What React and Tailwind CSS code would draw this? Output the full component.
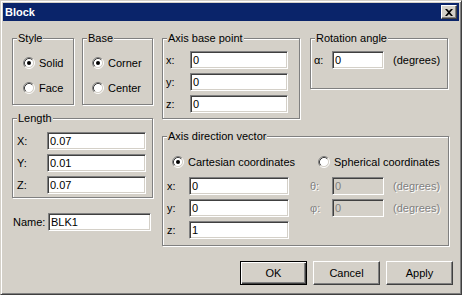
import React from 'react';

function Group({ label, className, children }) {
  return (
    <div className={`relative border border-[#808080] shadow-[inset_1px_1px_0_#fff,1px_1px_0_#fff] ${className}`}>
      <span className="absolute -top-[7px] left-[4px] bg-[#d4d0c8] px-[1px] leading-[13px]">{label}</span>
      {children}
    </div>
  );
}

function Field({ value, className, disabled }) {
  return (
    <input
      readOnly
      value={value}
      disabled={disabled}
      className={`h-[18px] border border-t-[#808080] border-l-[#808080] border-b-white border-r-white shadow-[inset_1px_1px_0_#404040,inset_-1px_-1px_0_#d4d0c8] pl-[2px] text-[11px] outline-none ${
        disabled ? 'bg-[#d4d0c8] text-[#808080]' : 'bg-white text-black'
      } ${className}`}
    />
  );
}

function Radio({ checked }) {
  return (
    <svg width="12" height="12" viewBox="0 0 12 12" className="shrink-0">
      <circle cx="6" cy="6" r="4.5" fill="#fff" />
      <path d="M9.89 2.11A5.5 5.5 0 0 0 2.11 9.89" fill="none" stroke="#808080" />
      <path d="M2.11 9.89A5.5 5.5 0 0 0 9.89 2.11" fill="none" stroke="#fff" />
      <path d="M9.18 2.82A4.5 4.5 0 0 0 2.82 9.18" fill="none" stroke="#404040" />
      <path d="M2.82 9.18A4.5 4.5 0 0 0 9.18 2.82" fill="none" stroke="#d4d0c8" />
      {checked && <circle cx="6" cy="6" r="2" fill="#000" />}
    </svg>
  );
}

function Option({ label, checked, className = '' }) {
  return (
    <div className={`flex h-[16px] items-center gap-[4px] ${className}`}>
      <Radio checked={checked} />
      <span>{label}</span>
    </div>
  );
}

function Button({ label, primary }) {
  return (
    <button
      className={`h-[24px] w-[67px] text-[11px] text-black bg-[#d4d0c8] ${
        primary
          ? 'border border-black shadow-[inset_1px_1px_0_#fff,inset_-1px_-1px_0_#404040,inset_-2px_-2px_0_#808080]'
          : 'border border-t-white border-l-white border-b-[#404040] border-r-[#404040] shadow-[inset_-1px_-1px_0_#808080]'
      }`}
    >
      {label}
    </button>
  );
}

export default function App() {
  return (
    <div className="w-[462px] h-[295px] bg-[#d4d0c8] border border-t-[#d4d0c8] border-l-[#d4d0c8] border-b-[#404040] border-r-[#404040] shadow-[inset_1px_1px_0_#fff,inset_-1px_-1px_0_#808080] p-[2px] flex flex-col font-['Liberation_Sans',Arial,sans-serif] text-[11px] text-black leading-[13px]">
      {/* Title bar */}
      <div className="h-[18px] bg-[#0a246a] flex items-center justify-between pl-[2px] pr-[2px]">
        <span className="font-bold text-white text-[11px]">Block</span>
        <div className="w-[16px] h-[14px] bg-[#d4d0c8] border border-t-white border-l-white border-b-[#404040] border-r-[#404040] shadow-[inset_-1px_-1px_0_#808080] flex items-center justify-center">
          <svg width="8" height="7" viewBox="0 0 8 7">
            <path d="M0 0h2l2 2 2-2h2L5 3.5 8 7H6L4 5 2 7H0l3-3.5z" fill="#000" />
          </svg>
        </div>
      </div>

      {/* Body */}
      <div className="flex gap-[9px] pl-[9px] pt-[17px]">
        {/* Left column */}
        <div className="flex flex-col w-[141px]">
          <div className="flex gap-[8px]">
            <Group label="Style" className="w-[62px] h-[67px] pt-[16px] pl-[10px] flex flex-col gap-[9px]">
              <Option label="Solid" checked />
              <Option label="Face" />
            </Group>
            <Group label="Base" className="w-[71px] h-[67px] pt-[16px] pl-[9px] flex flex-col gap-[9px]">
              <Option label="Corner" checked />
              <Option label="Center" />
            </Group>
          </div>

          <Group label="Length" className="mt-[13px] w-[141px] h-[80px] pt-[13px] pl-[4px] flex flex-col gap-[4px]">
            {[['X:', '0.07'], ['Y:', '0.01'], ['Z:', '0.07']].map(([l, v]) => (
              <div key={l} className="flex items-center">
                <span className="w-[30px]">{l}</span>
                <Field value={v} className="w-[99px]" />
              </div>
            ))}
          </Group>

          <div className="mt-[15px] flex items-center">
            <span className="w-[36px] pl-[1px]">Name:</span>
            <Field value="BLK1" className="w-[103px]" />
          </div>
        </div>

        {/* Right column */}
        <div className="flex flex-col">
          <div className="flex gap-[10px]">
            <Group label="Axis base point" className="w-[138px] h-[81px] pt-[12px] pl-[3px] flex flex-col gap-[4px]">
              {['x:', 'y:', 'z:'].map((l) => (
                <div key={l} className="flex items-center">
                  <span className="w-[24px]">{l}</span>
                  <Field value="0" className="w-[98px]" />
                </div>
              ))}
            </Group>
            <Group label="Rotation angle" className="w-[138px] h-[51px] pt-[12px] pl-[3px]">
              <div className="flex items-center">
                <span className="w-[18px]">α:</span>
                <Field value="0" className="w-[52px]" />
                <span className="ml-[9px]">(degrees)</span>
              </div>
            </Group>
          </div>

          <Group label="Axis direction vector" className="mt-[17px] w-[287px] h-[110px] pt-[17px] flex flex-col">
            <div className="flex pl-[9px]">
              <Option label="Cartesian coordinates" checked className="w-[146px]" />
              <Option label="Spherical coordinates" />
            </div>
            <div className="mt-[7px] pl-[4px] flex flex-col gap-[4px]">
              {[
                ['x:', '0', 'θ:'],
                ['y:', '0', 'φ:'],
                ['z:', '1', null],
              ].map(([l, v, s]) => (
                <div key={l} className="flex items-center">
                  <span className="w-[22px]">{l}</span>
                  <Field value={v} className="w-[100px]" />
                  {s && (
                    <div className="flex items-center ml-[21px] text-[#808080]">
                      <span className="w-[22px] [text-shadow:1px_1px_0_#fff]">{s}</span>
                      <Field value="0" disabled className="w-[52px]" />
                      <span className="ml-[9px] [text-shadow:1px_1px_0_#fff]">(degrees)</span>
                    </div>
                  )}
                </div>
              ))}
            </div>
          </Group>
        </div>
      </div>

      {/* Buttons */}
      <div className="mt-[15px] flex justify-end gap-[6px] pr-[6px]">
        <Button label="OK" primary />
        <Button label="Cancel" />
        <Button label="Apply" />
      </div>
    </div>
  );
}
